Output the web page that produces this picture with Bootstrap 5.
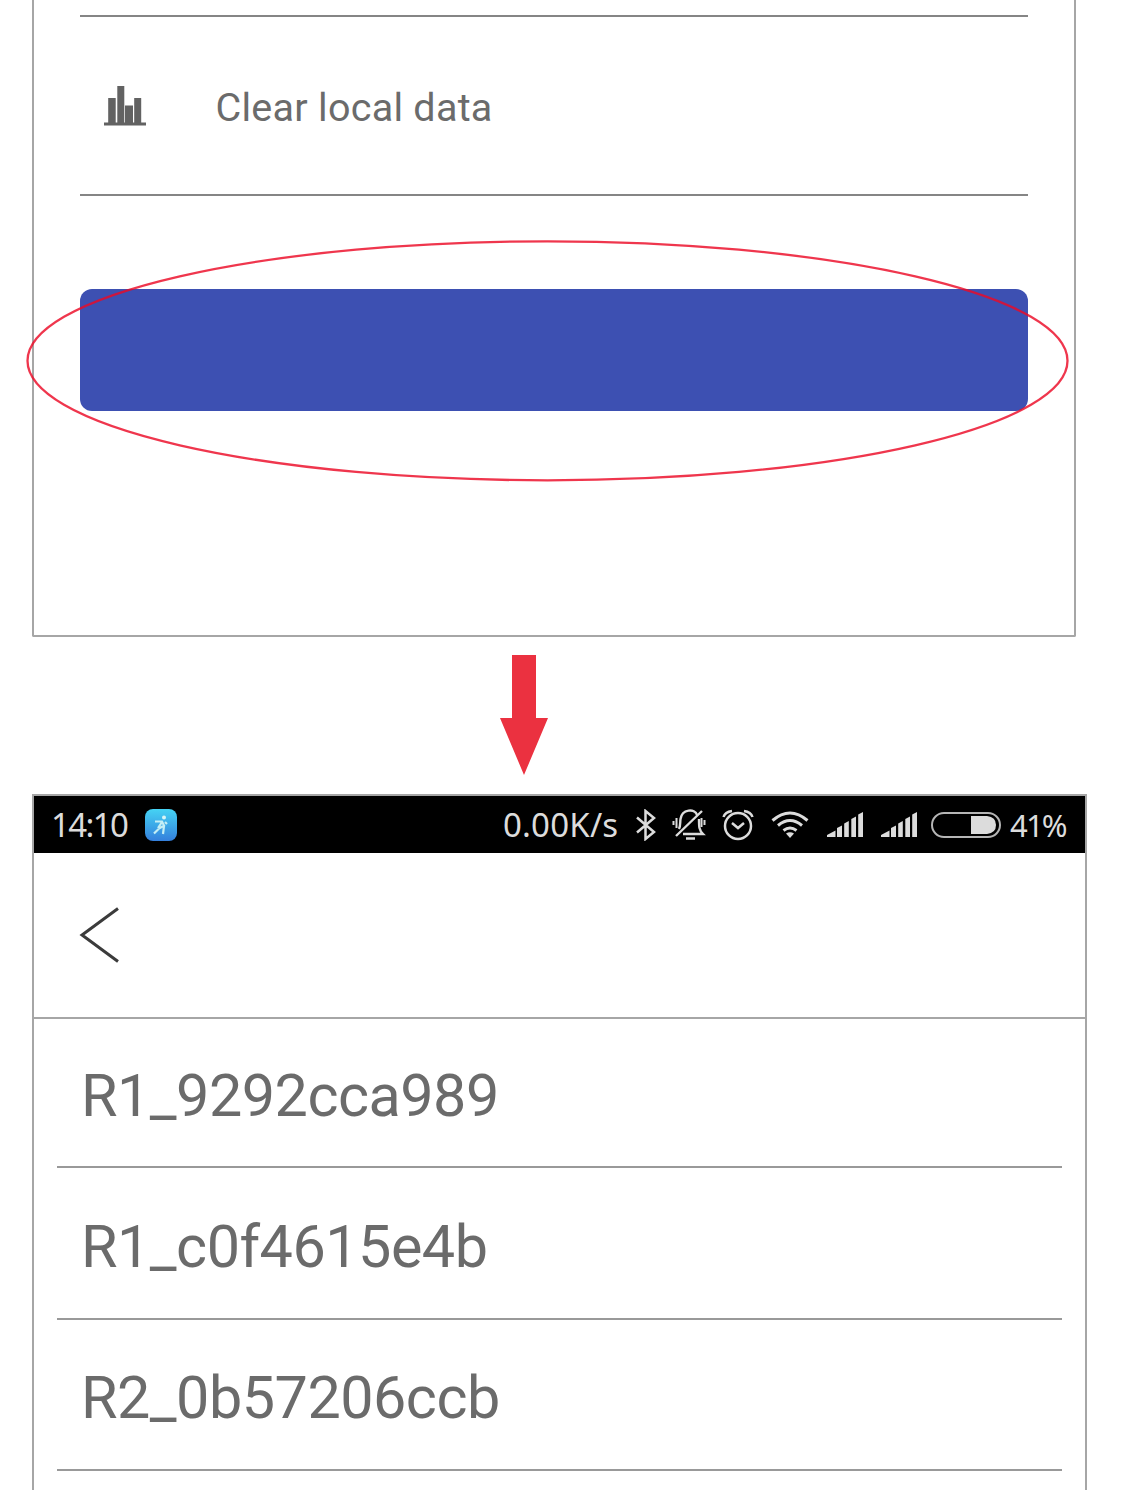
<!DOCTYPE html>
<html lang="en">
<head>
<meta charset="utf-8">
<meta name="viewport" content="width=device-width, initial-scale=1">
<title>Clear local data</title>
<link href="https://cdn.jsdelivr.net/npm/bootstrap@5.3.0/dist/css/bootstrap.min.css" rel="stylesheet">
<style>
body { width: 1125px; height: 1490px; overflow: hidden; background: #fff; color: #6b6b6b; font-family: Roboto, sans-serif; }
svg { display: block; flex-shrink: 0; }
.settings-panel { width: 1044px; height: 637px; margin-left: 32px; padding: 15px 46px 0 46px; border: 2px solid #a6a6a6; border-top: 0; border-radius: 0 0 2px 2px; }
.setting-row { height: 181px; border-top: 2px solid #858585; border-bottom: 2px solid #858585; padding-left: 23.500px; }
.setting-label { font-size: 39.5px; line-height: 48px; margin-left: 70px; padding-top: 4px; letter-spacing: .27px; white-space: nowrap; }
.action-btn { height: 122px; margin-top: 93px; border-radius: 12px; background: #3d50b2; border: 0; }
.marker-ring { left: 20px; top: 232px; pointer-events: none; }
.arrow-step { height: 157px; padding: 18px 0 0 500px; }
.phone-panel { width: 1055px; height: 700px; margin-left: 32px; border: 2px solid #a6a6a6; border-bottom: 0; }
.status-strip { height: 57px; background: #000; color: #dcdcdc; font-family: "Noto Sans", sans-serif; font-size: 33px; line-height: 40px; padding: 0 16px 0 17px; white-space: nowrap; }
.status-time { width: 94px; letter-spacing: -1.6px; }
.status-speed { width: 133px; letter-spacing: .2px; }
.status-pct { width: 59px; font-size: 31px; letter-spacing: -1.8px; }
.signal-mark { margin-left: 18px; }
.wifi-mark { margin-left: 17px; }
.battery-mark { margin: 0 9px 0 14px; }
.title-strip { height: 166px; border-bottom: 2px solid #a6a6a6; padding: 2px 0 2px 45px; }
.device-list { padding: 0 23px 0 23px; }
.device-row { height: 151px; border-bottom: 2px solid #999; padding: 7px 0 0 24px; font-size: 59.3px; letter-spacing: -.5px; line-height: 70px; white-space: nowrap; }
.device-row:first-child { height: 149px; }
.device-row:nth-child(2) { height: 152px; }
</style>
</head>
<body class="position-relative">
<section class="settings-panel">
  <div class="setting-row d-flex align-items-center">
    <svg width="42" height="40" viewBox="0 0 42 40" fill="#626262"><path d="M0 36.500h42v3H0zM4.200 12h7.500v25H4.200zM13.300 0h7v37h-7zM21 19.500h8V37h-8zM30.200 12h7v25h-7z"/></svg>
    <span class="setting-label">Clear local data</span>
  </div>
  <button type="button" class="action-btn d-block w-100" aria-label="Clear"></button>
</section>
<svg class="marker-ring position-absolute" width="1060" height="258" viewBox="20 232 1060 258"><ellipse cx="547.500" cy="360.800" rx="520" ry="119.500" fill="none" stroke="#eb0a26" stroke-opacity=".82" stroke-width="2.300"/></svg>
<div class="arrow-step"><svg width="48" height="120" viewBox="0 0 48 120"><path d="M12 0h24v63h12L24 120 0 63h12z" fill="#eb3140"/></svg></div>
<section class="phone-panel">
  <div class="status-strip d-flex align-items-center">
    <span class="status-time">14:10</span>
    <svg width="32" height="32" viewBox="0 0 32 32"><defs><linearGradient id="appbg" x2="0" y2="1"><stop stop-color="#45d3f4"/><stop offset="1" stop-color="#347fdc"/></linearGradient></defs><rect width="32" height="32" rx="8" fill="url(#appbg)"/><circle cx="19" cy="8.500" r="2" fill="#d9f5f5"/><path d="M10 12.500h7l2 4-5 3-5 5M17 13l-4 6M19 17l-1 8M20 13l2 2" fill="none" stroke="#c4eef5" stroke-width="2.200"/></svg>
    <span class="status-speed ms-auto">0.00K/s</span>
    <svg width="20" height="32" viewBox="0 0 20 32" fill="none" stroke="#dcdcdc" stroke-width="2.500"><path d="M1 8.500 18 23l-8.500 7V2L18 9 1 23.500"/></svg>
    <svg class="ms-3" width="34" height="32" viewBox="0 0 34 32" fill="none" stroke="#dcdcdc" stroke-width="2.400"><path d="M7 20C8.500 17 8 14 8.500 10 10 0 23-1 25 6M27 10c0 8 0 11 4 15H11M14 29.500h9M4 27 30 2"/><path d="M4.500 9v10M1.500 12v4M29.500 9v9M32.500 11v5" stroke-width="2"/></svg>
    <svg class="ms-3" width="32" height="32" viewBox="0 0 32 32" fill="none" stroke="#dcdcdc" stroke-width="2.500"><circle cx="16" cy="17" r="13"/><path d="M10 14l6 5 6-5M1.500 8Q3 3 10 2M22 2q7 1 8.500 6"/></svg>
    <svg class="wifi-mark" width="38" height="27" viewBox="0 0 38 27" fill="none" stroke="#dcdcdc" stroke-width="3"><path d="M1.500 9.500Q19-5.500 36.500 9.500M7 14.500q12-10 24 0M12.500 19.500q6.500-5 13 0"/><path d="M15 22.500q4-2.500 8 0L19 27z" fill="#dcdcdc" stroke="none"/></svg>
    <svg class="signal-mark" width="36" height="25" viewBox="0 0 36 25" fill="#dcdcdc"><path d="M0 25v-2l8.500-4.500V25zM10 16l5-2.500V25h-5zM17.200 11.500l4.600-2.500v16h-4.600zM24.300 7l4.700-2.500V25h-4.700zM31.200 2.500 36 0v25h-4.800z"/></svg>
    <svg class="signal-mark" width="36" height="25" viewBox="0 0 36 25" fill="#dcdcdc"><path d="M0 25v-2l8.500-4.500V25zM10 16l5-2.500V25h-5zM17.200 11.500l4.600-2.500v16h-4.600zM24.300 7l4.700-2.500V25h-4.700zM31.200 2.500 36 0v25h-4.800z"/></svg>
    <svg class="battery-mark" width="70" height="26" viewBox="0 0 70 26"><rect x="1" y="1" width="68" height="24" rx="12" fill="none" stroke="#b5b5b5" stroke-width="2"/><path d="M40 4h16q9 1 9 9t-9 9H40z" fill="#dcdcdc"/></svg>
    <span class="status-pct">41%</span>
  </div>
  <div class="title-strip d-flex align-items-center">
    <svg width="40" height="56" viewBox="0 0 40 56" fill="none" stroke="#3b3b3b" stroke-width="3"><path d="M39 1.500 3 28l36 26.500"/></svg>
  </div>
  <div class="device-list">
    <div class="device-row d-flex align-items-center">R1_9292cca989</div>
    <div class="device-row d-flex align-items-center">R1_c0f4615e4b</div>
    <div class="device-row d-flex align-items-center">R2_0b57206ccb</div>
  </div>
</section>
<script src="https://cdn.jsdelivr.net/npm/bootstrap@5.3.0/dist/js/bootstrap.bundle.min.js"></script>
</body>
</html>
